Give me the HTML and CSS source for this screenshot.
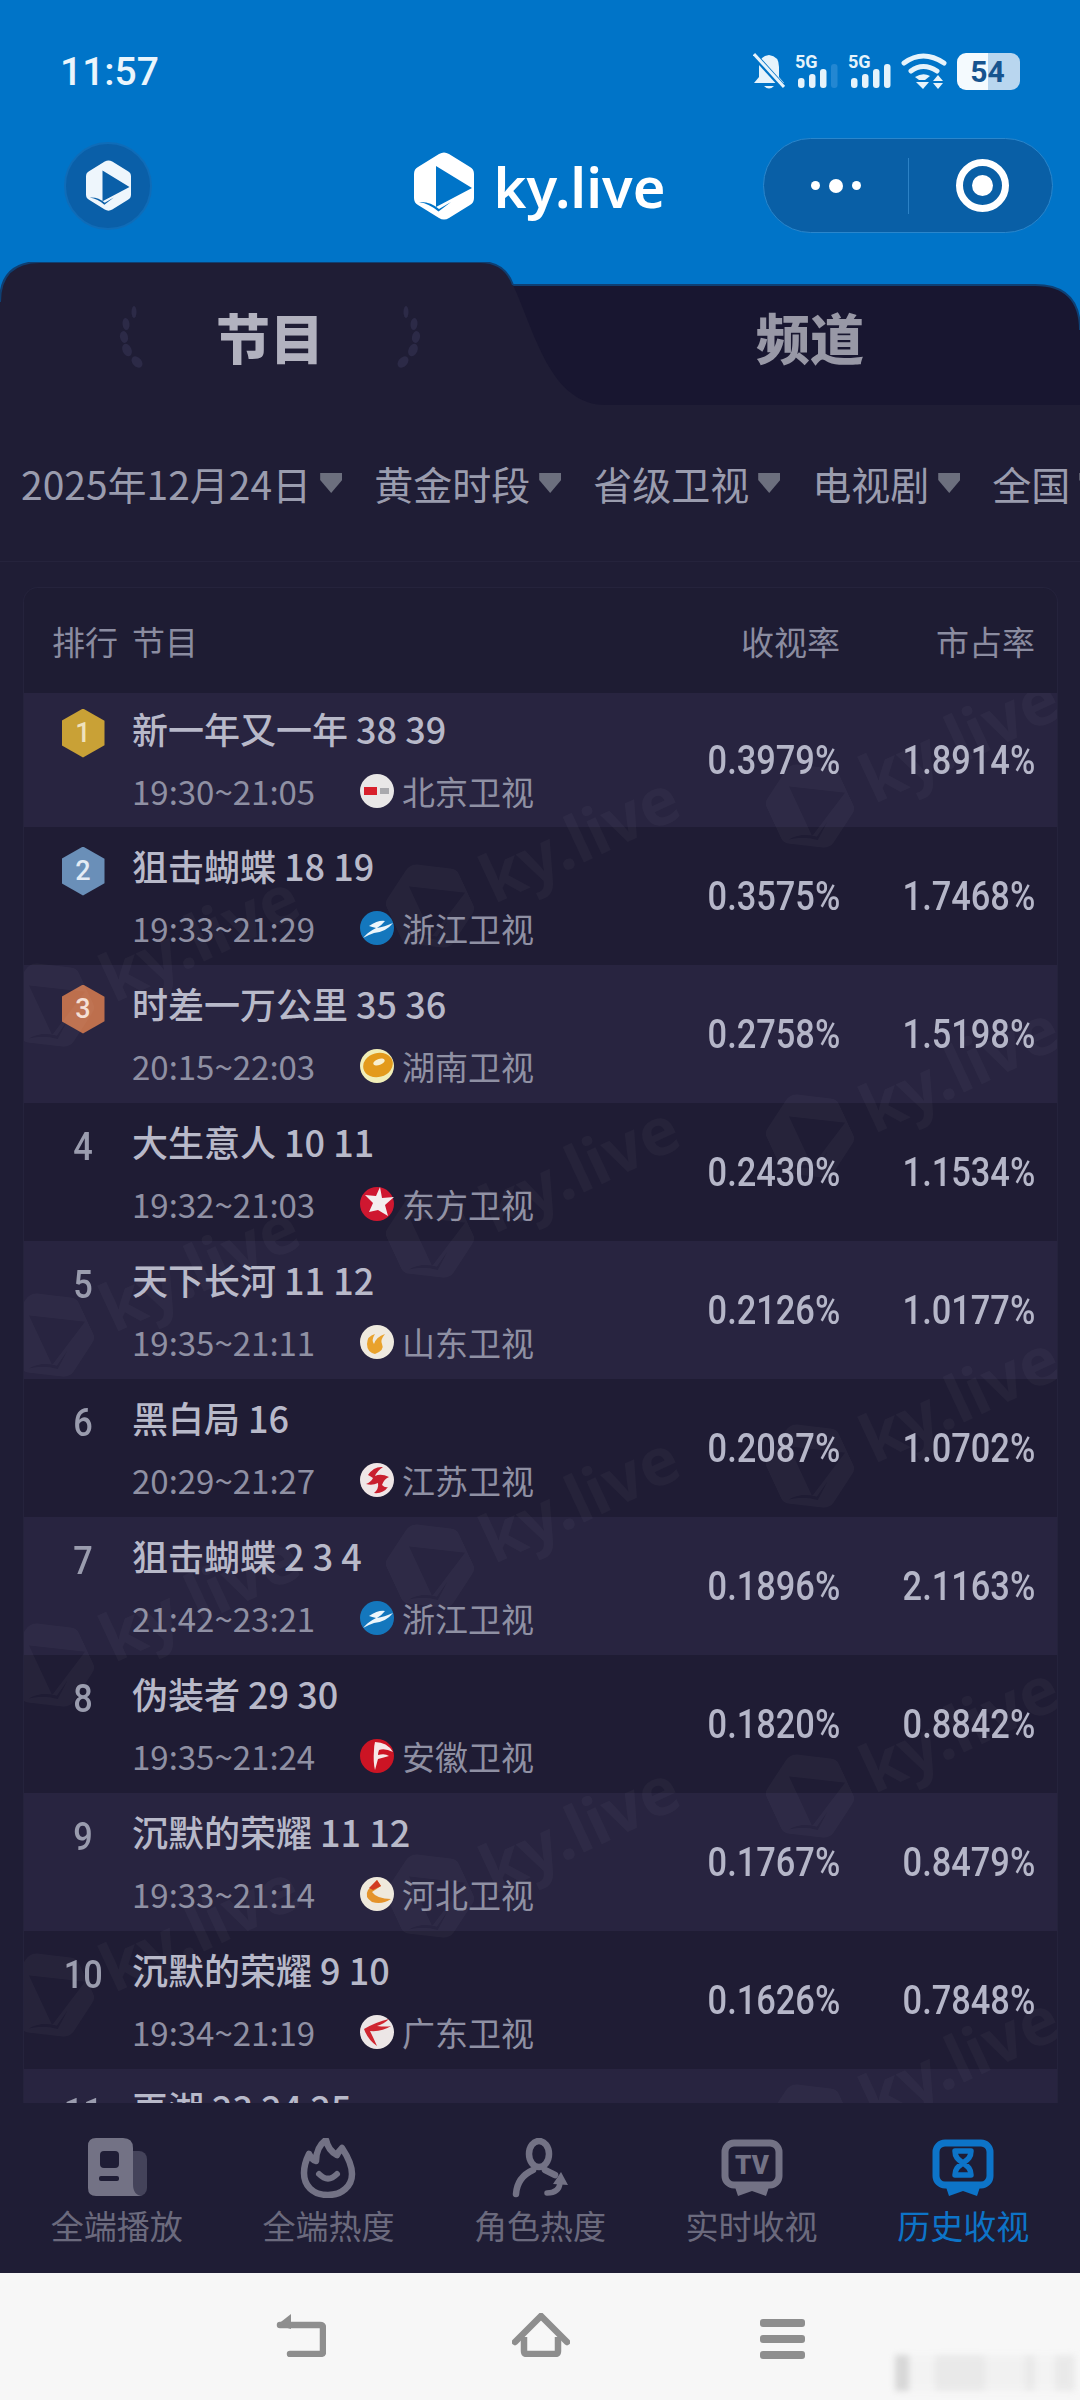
FILE: index.html
```html
<!DOCTYPE html>
<html lang="zh-CN">
<head>
  <meta charset="UTF-8" />
  <meta name="viewport" content="width=device-width, initial-scale=1.0"/>
  <title>ky.live 历史收视</title>
  <link rel="stylesheet" href="styles.css">
</head>
<body>

<!-- shared shapes -->
<svg class="defs" width="0" height="0">
  <symbol id="ky" viewBox="0 0 60 68">
    <path fill-rule="evenodd" d="M25 2Q30-1 35 2L56 15Q60 17 60 22V46Q60 51 56 53L35 66Q30 69 25 66L4 53Q0 51 0 46V22Q0 17 4 15ZM22 14V55L58 36ZM5 50Q16 49 25 57L37 50L24.500 59.500Q16 52 5 50Z"/>
  </symbol>
  <symbol id="ch-bj" viewBox="0 0 34 34">
    <circle cx="17" cy="17" r="17" fill="#e9e7e7"/>
    <rect x="4" y="13" width="13" height="8" fill="#d8202c"/>
    <rect x="20" y="14" width="9" height="6" fill="#a9a9ad"/>
  </symbol>
  <symbol id="ch-zj" viewBox="0 0 34 34">
    <circle cx="17" cy="17" r="17" fill="#1477bd"/>
    <path d="M9 15Q18 9 25 10Q21 15 17 17Q24 16 33 12Q26 21 14 22Q8 24 3 27Q8 21 16 17Q12 16 9 15Z" fill="#eef6fb"/>
  </symbol>
  <symbol id="ch-hn" viewBox="0 0 34 34">
    <circle cx="17" cy="17" r="17" fill="#f1eeb8"/>
    <ellipse cx="18" cy="16" rx="15" ry="12" fill="#e39a1c" transform="rotate(-15 18 16)"/>
    <ellipse cx="19" cy="13" rx="6" ry="3" fill="#f8efd0" transform="rotate(-20 19 13)"/>
  </symbol>
  <symbol id="ch-df" viewBox="0 0 34 34">
    <circle cx="17" cy="17" r="17" fill="#cf1730"/>
    <path d="M20 0L22 11L34 10L25 18L28 29L18 23L9 25L13 16L5 8L16 9Z" fill="#f3eeee"/>
  </symbol>
  <symbol id="ch-sd" viewBox="0 0 34 34">
    <circle cx="17" cy="17" r="17" fill="#efeadf"/>
    <path d="M7 19Q7 11 15 9Q11 15 14 19Q16 12 25 9Q20 15 22 19Q25 25 15 29Q7 27 7 19Z" fill="#e9a22c"/>
  </symbol>
  <symbol id="ch-js" viewBox="0 0 34 34">
    <circle cx="17" cy="17" r="17" fill="#efe6e6"/>
    <path d="M8 12Q14 3 23 4Q17 8 15 13Q21 10 29 14Q24 16 22 22Q25 25 28 24Q23 31 14 30Q19 26 18 20Q12 23 6 21Q11 19 13 15Q10 13 8 12Z" fill="#c91f2e"/>
  </symbol>
  <symbol id="ch-ah" viewBox="0 0 34 34">
    <circle cx="17" cy="17" r="17" fill="#cc1424"/>
    <path d="M15 3Q27 3 33 13Q25 9 19 11Q18 14 18 16Q25 14 29 17Q22 19 18 20L15 31Q13 23 14 11Q14 7 15 3Z" fill="#f6e7e7"/>
  </symbol>
  <symbol id="ch-hb" viewBox="0 0 34 34">
    <circle cx="17" cy="17" r="17" fill="#efe9dc"/>
    <path d="M17 3L21 9L12 15Q17 22 31 22Q22 28 12 25Q4 20 8 13Z" fill="#e4932a"/>
    <path d="M17 3L21 9L13 13L9 11Z" fill="#d23b22"/>
  </symbol>
  <symbol id="ch-gd" viewBox="0 0 34 34">
    <circle cx="17" cy="17" r="17" fill="#ece6e6"/>
    <path d="M4 14Q16 7 29 4Q24 9 17 11Q26 12 31 11Q22 17 10 16Q13 22 17 31Q8 25 4 14Z" fill="#cf2630"/>
  </symbol>
  <symbol id="tv-frame" viewBox="0 0 62 58">
    <rect x="4" y="4" width="54" height="42" rx="9" fill="none" stroke="currentColor" stroke-width="7"/>
    <path d="M14 48H48L45 57L31 52L17 57Z" fill="currentColor"/>
  </symbol>
  <symbol id="leaves" viewBox="0 0 30 62">
    <g fill="#2c2a47">
      <ellipse cx="16" cy="6" rx="2.500" ry="6"/>
      <ellipse cx="8" cy="18" rx="3.500" ry="6" transform="rotate(-6 8 18)"/>
      <ellipse cx="6" cy="31" rx="4" ry="6" transform="rotate(-12 6 31)"/>
      <ellipse cx="9" cy="44" rx="4.500" ry="6.500" transform="rotate(-24 9 44)"/>
      <ellipse cx="19" cy="56" rx="4.500" ry="6.500" transform="rotate(-42 19 56)"/>
    </g>
  </symbol>
</svg>

<header class="top">
  <div class="status">
    <span class="clock">11:57</span>
    <div class="status-icons">
      <svg width="32" height="37" viewBox="0 0 32 37"><path d="M16 2Q26 3 26 14V24L31 30H1L6 24V14Q6 3 16 2Z" fill="#e6f3fb"/><path d="M11 33H21Q16 38 11 33Z" fill="#e6f3fb"/><path d="M1 2L31 35" stroke="#0074c8" stroke-width="6"/><path d="M1 1L31 34" stroke="#e6f3fb" stroke-width="3"/></svg>
      <svg width="43" height="37" viewBox="0 0 43 37"><text x="0" y="15" class="net">5G</text><rect x="3" y="25" width="6.5" height="10" rx="3" fill="#e6f3fb"/><rect x="14" y="21" width="6.5" height="14" rx="3" fill="#e6f3fb"/><rect x="25" y="16" width="6.5" height="19" rx="3" fill="#e6f3fb"/><rect x="36" y="11" width="6.5" height="24" rx="3" fill="#2387d2"/></svg>
      <svg width="43" height="37" viewBox="0 0 43 37"><text x="0" y="15" class="net">5G</text><rect x="3" y="25" width="6.5" height="10" rx="3" fill="#e6f3fb"/><rect x="14" y="21" width="6.5" height="14" rx="3" fill="#e6f3fb"/><rect x="25" y="16" width="6.5" height="19" rx="3" fill="#e6f3fb"/><rect x="36" y="11" width="6.5" height="24" rx="3" fill="#e6f3fb"/></svg>
      <svg width="46" height="37" viewBox="0 0 46 37"><g fill="none" stroke="#e6f3fb" stroke-width="5" stroke-linecap="round"><path d="M3 10Q22-4 43 10"/><path d="M10 18Q22 9 36 18"/></g><path d="M14 24Q22 19 29 23L24 27H18Z" fill="#e6f3fb"/><path d="M15 29H28L22 36Z" fill="#e6f3fb"/><path d="M37 22L42 28H32ZM32 30H42L37 36Z" fill="#e6f3fb"/></svg>
      <div class="battery"><span class="battery-num">54</span></div>
    </div>
  </div>
  <div class="appbar">
    <div class="avatar"><svg width="45" height="51"><use href="#ky" fill="#eef6fc"/></svg></div>
    <div class="brand">
      <svg width="60" height="68"><use href="#ky" fill="#fff"/></svg>
      <span class="brand-name">ky.live</span>
    </div>
    <div class="capsule">
      <div class="capsule-dots"><i class="dot"></i><i class="dot dot-big"></i><i class="dot"></i></div>
      <div class="capsule-line"></div>
      <div class="capsule-target"><i class="target-core"></i></div>
    </div>
  </div>
</header>

<section class="tabs">
  <svg class="tabs-bg" width="1080" height="143" viewBox="0 0 1080 143">
    <path d="M480 23H1035Q1080 23 1080 68V143H0Z" fill="#181630"/>
    <path d="M480 23H1035Q1080 23 1080 68" fill="none" stroke="#0f3f72" stroke-width="2"/>
    <path d="M0 143V40Q0 0 40 0H480Q505 0 513 23C535 70 550 143 606 143Z" fill="#1f1d35"/>
    <path d="M0 40Q0 0 40 0H480Q505 0 513 23" fill="none" stroke="#0f3f72" stroke-width="2"/>
  </svg>
  <div class="tab tab-on">
    <svg class="laurel" width="30" height="62"><use href="#leaves"/></svg>
    <span>节目</span>
    <svg class="laurel laurel-r" width="30" height="62"><use href="#leaves"/></svg>
  </div>
  <div class="tab tab-off"><span>频道</span></div>
</section>

<main class="content">
  <div class="filters">
    <div class="filter">2025年12月24日<i class="caret"></i></div>
    <div class="filter">黄金时段<i class="caret"></i></div>
    <div class="filter">省级卫视<i class="caret"></i></div>
    <div class="filter">电视剧<i class="caret"></i></div>
    <div class="filter">全国<i class="caret"></i></div>
  </div>

  <div class="board">
    <div class="board-head">
      <span class="head-rank">排行</span>
      <span>节目</span>
      <span class="head-num">收视率</span>
      <span class="head-num">市占率</span>
    </div>
    <div class="board-body">
      <div class="rows">
        <div class="row">
          <div class="rank"><span class="medal medal-1">1</span></div>
          <div class="info">
            <div class="title">新一年又一年 38 39</div>
            <div class="sub"><span class="time">19:30~21:05</span><svg class="ch-logo"><use href="#ch-bj"/></svg>北京卫视</div>
          </div>
          <div class="num"><span>0.3979%</span></div>
          <div class="num"><span>1.8914%</span></div>
        </div>
        <div class="row">
          <div class="rank"><span class="medal medal-2">2</span></div>
          <div class="info">
            <div class="title">狙击蝴蝶 18 19</div>
            <div class="sub"><span class="time">19:33~21:29</span><svg class="ch-logo"><use href="#ch-zj"/></svg>浙江卫视</div>
          </div>
          <div class="num"><span>0.3575%</span></div>
          <div class="num"><span>1.7468%</span></div>
        </div>
        <div class="row">
          <div class="rank"><span class="medal medal-3">3</span></div>
          <div class="info">
            <div class="title">时差一万公里 35 36</div>
            <div class="sub"><span class="time">20:15~22:03</span><svg class="ch-logo"><use href="#ch-hn"/></svg>湖南卫视</div>
          </div>
          <div class="num"><span>0.2758%</span></div>
          <div class="num"><span>1.5198%</span></div>
        </div>
        <div class="row">
          <div class="rank"><span class="rank-num">4</span></div>
          <div class="info">
            <div class="title">大生意人 10 11</div>
            <div class="sub"><span class="time">19:32~21:03</span><svg class="ch-logo"><use href="#ch-df"/></svg>东方卫视</div>
          </div>
          <div class="num"><span>0.2430%</span></div>
          <div class="num"><span>1.1534%</span></div>
        </div>
        <div class="row">
          <div class="rank"><span class="rank-num">5</span></div>
          <div class="info">
            <div class="title">天下长河 11 12</div>
            <div class="sub"><span class="time">19:35~21:11</span><svg class="ch-logo"><use href="#ch-sd"/></svg>山东卫视</div>
          </div>
          <div class="num"><span>0.2126%</span></div>
          <div class="num"><span>1.0177%</span></div>
        </div>
        <div class="row">
          <div class="rank"><span class="rank-num">6</span></div>
          <div class="info">
            <div class="title">黑白局 16</div>
            <div class="sub"><span class="time">20:29~21:27</span><svg class="ch-logo"><use href="#ch-js"/></svg>江苏卫视</div>
          </div>
          <div class="num"><span>0.2087%</span></div>
          <div class="num"><span>1.0702%</span></div>
        </div>
        <div class="row">
          <div class="rank"><span class="rank-num">7</span></div>
          <div class="info">
            <div class="title">狙击蝴蝶 2 3 4</div>
            <div class="sub"><span class="time">21:42~23:21</span><svg class="ch-logo"><use href="#ch-zj"/></svg>浙江卫视</div>
          </div>
          <div class="num"><span>0.1896%</span></div>
          <div class="num"><span>2.1163%</span></div>
        </div>
        <div class="row">
          <div class="rank"><span class="rank-num">8</span></div>
          <div class="info">
            <div class="title">伪装者 29 30</div>
            <div class="sub"><span class="time">19:35~21:24</span><svg class="ch-logo"><use href="#ch-ah"/></svg>安徽卫视</div>
          </div>
          <div class="num"><span>0.1820%</span></div>
          <div class="num"><span>0.8842%</span></div>
        </div>
        <div class="row">
          <div class="rank"><span class="rank-num">9</span></div>
          <div class="info">
            <div class="title">沉默的荣耀 11 12</div>
            <div class="sub"><span class="time">19:33~21:14</span><svg class="ch-logo"><use href="#ch-hb"/></svg>河北卫视</div>
          </div>
          <div class="num"><span>0.1767%</span></div>
          <div class="num"><span>0.8479%</span></div>
        </div>
        <div class="row">
          <div class="rank"><span class="rank-num">10</span></div>
          <div class="info">
            <div class="title">沉默的荣耀 9 10</div>
            <div class="sub"><span class="time">19:34~21:19</span><svg class="ch-logo"><use href="#ch-gd"/></svg>广东卫视</div>
          </div>
          <div class="num"><span>0.1626%</span></div>
          <div class="num"><span>0.7848%</span></div>
        </div>
        <div class="row">
          <div class="rank"><span class="rank-num">11</span></div>
          <div class="info">
            <div class="title">再湖 23 24 25</div>
          </div>
        </div>
      </div>

      <!-- watermark sits over the rows -->
      <div class="marks">
        <div class="mark-col mark-col-c">
          <div class="mark"><svg width="80" height="91"><use href="#ky"/></svg><span>ky.live</span></div>
          <div class="mark"><svg width="80" height="91"><use href="#ky"/></svg><span>ky.live</span></div>
          <div class="mark"><svg width="80" height="91"><use href="#ky"/></svg><span>ky.live</span></div>
          <div class="mark"><svg width="80" height="91"><use href="#ky"/></svg><span>ky.live</span></div>
        </div>
        <div class="mark-col mark-col-b">
          <div class="mark"><svg width="80" height="91"><use href="#ky"/></svg><span>ky.live</span></div>
          <div class="mark"><svg width="80" height="91"><use href="#ky"/></svg><span>ky.live</span></div>
          <div class="mark"><svg width="80" height="91"><use href="#ky"/></svg><span>ky.live</span></div>
          <div class="mark"><svg width="80" height="91"><use href="#ky"/></svg><span>ky.live</span></div>
        </div>
        <div class="mark-col mark-col-a">
          <div class="mark"><svg width="80" height="91"><use href="#ky"/></svg><span>ky.live</span></div>
          <div class="mark"><svg width="80" height="91"><use href="#ky"/></svg><span>ky.live</span></div>
          <div class="mark"><svg width="80" height="91"><use href="#ky"/></svg><span>ky.live</span></div>
          <div class="mark"><svg width="80" height="91"><use href="#ky"/></svg><span>ky.live</span></div>
          <div class="mark"><svg width="80" height="91"><use href="#ky"/></svg><span>ky.live</span></div>
        </div>
      </div>
    </div>
  </div>
</main>

<nav class="tabbar">
  <div class="tabbar-item">
    <svg width="60" height="60" viewBox="0 0 60 60">
      <rect x="30" y="13" width="30" height="45" rx="8" fill="#44435a"/>
      <path d="M9 0H36Q46 0 46 10V46Q46 58 56 58H9Q1 58 1 50V8Q1 0 9 0Z" fill="#737285"/>
      <rect x="13" y="13" width="19" height="17" rx="4" fill="#1f1d35"/>
      <rect x="12" y="38" width="20" height="5" rx="2" fill="#1f1d35"/>
    </svg>
    <span>全端播放</span>
  </div>
  <div class="tabbar-item">
    <svg width="60" height="60" viewBox="0 0 60 60">
      <path d="M30 57C14 57 6 47 6 35C6 28 8 22 11 16C13 20 15 22 18 23C18 14 22 6 28 2C30 11 35 15 39 17C40 14 42 12 44 10C50 19 54 27 54 36C54 48 44 57 30 57Z" fill="none" stroke="#737285" stroke-width="6.500" stroke-linejoin="round"/>
      <path d="M21 36Q30 45 39 36" fill="none" stroke="#737285" stroke-width="6" stroke-linecap="round"/>
    </svg>
    <span>全端热度</span>
  </div>
  <div class="tabbar-item">
    <svg width="60" height="60" viewBox="0 0 60 60">
      <ellipse cx="29" cy="16" rx="10" ry="13" fill="none" stroke="#737285" stroke-width="6.500"/>
      <path d="M6 56C7 43 14 36 23 32M35 32L45 37" fill="none" stroke="#737285" stroke-width="6.500" stroke-linecap="round"/>
      <path d="M37 55Q49 55 50 45" fill="none" stroke="#737285" stroke-width="5.500" stroke-linecap="round"/>
      <path d="M43 46L51 34L58 47Z" fill="#737285"/>
    </svg>
    <span>角色热度</span>
  </div>
  <div class="tabbar-item tv-item">
    <svg width="62" height="60" viewBox="0 0 62 60">
      <use href="#tv-frame"/>
      <text x="31" y="36" text-anchor="middle" class="tv-text">TV</text>
    </svg>
    <span>实时收视</span>
  </div>
  <div class="tabbar-item tabbar-on">
    <svg width="62" height="60" viewBox="0 0 62 60">
      <use href="#tv-frame"/>
      <path d="M23 13H39C39 20 35 22 31 25C27 28 23 30 23 37H39C39 30 35 28 31 25C27 22 23 20 23 13Z" fill="none" stroke="currentColor" stroke-width="5.5" stroke-linejoin="round"/>
    </svg>
    <span>历史收视</span>
  </div>
</nav>

<footer class="sysbar">
  <svg width="50" height="44" viewBox="0 0 50 44"><path d="M4 12H44Q47 12 47 15V39Q47 41 44 41H14" fill="none" stroke="#8e8e8e" stroke-width="6.5" stroke-linecap="round"/><path d="M1 12L15 1V16Z" fill="#8e8e8e"/></svg>
  <svg width="58" height="44" viewBox="0 0 58 44"><path d="M3 29L29 3L55 29" fill="none" stroke="#8e8e8e" stroke-width="6.5" stroke-linecap="round" stroke-linejoin="round"/><path d="M12 24V38Q12 41 15 41H43Q46 41 46 38V24" fill="none" stroke="#8e8e8e" stroke-width="6.5"/></svg>
  <div class="menu-icon"><i></i><i></i><i></i></div>
  <div class="smudge"></div>
</footer>

</body>
</html>
```

FILE: styles.css
```css
* { box-sizing: border-box; margin: 0; padding: 0; }
body { width: 1080px; height: 2400px; overflow: hidden; display: flex; flex-direction: column; background-color: #1f1d35; color: #b8b9c9; font-family: "Noto Sans CJK SC", "Noto Sans", sans-serif; }
i { display: block; }
.defs { position: absolute; }

/* blue top */
.top { background-color: #0074c8; height: 262px; flex: none; }
.status { height: 138px; padding: 53px 60px 0 60px; display: flex; justify-content: space-between; align-items: flex-start; color: #eaf5fc; }
.clock { font-family: Roboto, sans-serif; font-size: 39px; line-height: 38px; font-weight: 500; }
.status-icons { display: flex; gap: 10px; align-items: flex-start; }
.net { font-family: Roboto, sans-serif; font-size: 18px; font-weight: 700; fill: #e6f3fb; }
.battery { width: 63px; height: 37px; border-radius: 9px; background: linear-gradient(90deg, #f4fafe 0 50%, #b9d6ef 50% 100%); display: flex; align-items: center; justify-content: center; padding-right: 2px; }
.battery-num { font-family: Roboto, sans-serif; font-size: 30px; font-weight: 700; color: #17548f; }

.appbar { height: 95px; padding: 0 27px 0 64px; display: flex; align-items: center; justify-content: space-between; }
.avatar { width: 88px; height: 88px; border-radius: 50%; background-color: #0a5fa8; border: 2px solid #0f6cb8; display: flex; align-items: center; justify-content: center; }
.brand { display: flex; align-items: center; gap: 20px; margin-left: 164px; }
.brand-name { font-family: "Noto Sans", sans-serif; font-size: 56px; font-weight: 600; color: #fff; line-height: 68px; }
.capsule { width: 290px; height: 95px; border-radius: 48px; background-color: #095fa6; border: 1.5px solid #2a86cc; display: flex; align-items: center; }
.capsule-dots { width: 144px; display: flex; justify-content: center; align-items: center; gap: 9px; }
.dot { width: 9px; height: 9px; border-radius: 50%; background-color: #fff; }
.dot-big { width: 14px; height: 14px; }
.capsule-line { width: 1px; height: 56px; background-color: #2c82c6; }
.capsule-target { width: 53px; height: 53px; margin-left: 47px; border-radius: 50%; border: 7px solid #fff; display: flex; align-items: center; justify-content: center; }
.target-core { width: 21px; height: 21px; border-radius: 50%; background-color: #fff; }

/* tabs */
.tabs { position: relative; height: 143px; flex: none; display: flex; background-color: #0074c8; }
.tabs-bg { position: absolute; left: 0; top: 0; }
.tab { position: relative; width: 540px; padding-top: 6px; display: flex; align-items: center; justify-content: center; gap: 68px; font-size: 54px; line-height: 60px; font-weight: 900; }
.tab-on { color: #b2b2bf; }
.tab-off { color: #9898a6; }
.laurel-r { transform: scaleX(-1); }

/* filter row */
.content { flex: 1; min-height: 0; overflow: hidden; background-color: #1f1d35; }
.filters { height: 157px; padding-left: 21px; display: flex; align-items: center; gap: 32px; white-space: nowrap; border-bottom: 1px solid #25233c; font-size: 39px; color: #9a9cae; }
.filter { display: flex; align-items: center; gap: 9px; flex: none; }
.caret { width: 22px; height: 20px; background-color: #6c6f7e; clip-path: polygon(0 0, 100% 0, 100% 35%, 50% 100%, 0 35%); }

/* ranking board */
.board { margin: 26px 23px 0 24px; border-radius: 14px 14px 0 0; background-color: #1e1c33; box-shadow: 0 0 0 1px #25233c; }
.board-head { height: 105px; padding-right: 22px; display: grid; grid-template-columns: 108px 1fr 140px 195px; align-items: center; font-size: 33px; color: #8b8ca0; }
.head-rank { padding-left: 28px; }
.head-num { text-align: right; }
.board-body { position: relative; overflow: hidden; }
.row { height: 138px; padding-right: 22px; display: grid; grid-template-columns: 108px 1fr 140px 195px; background-color: #1f1c34; }
.row:first-child { height: 134px; }
.row:first-child .rank { height: 80px; }
.row:first-child .title { padding-top: 12px; }
.row:nth-child(odd) { background-color: #282440; }

.rank { height: 88px; padding-left: 10px; display: flex; align-items: center; justify-content: center; }
.rank-num { font-family: Roboto, sans-serif; font-size: 39px; font-weight: 500; color: #9a9cae; display: inline-block; transform: scaleX(0.88); }
.medal { width: 43px; height: 49px; clip-path: polygon(50% 0, 100% 25%, 100% 75%, 50% 100%, 0 75%, 0 25%); display: flex; align-items: center; justify-content: center; font-family: Roboto, sans-serif; font-size: 27px; font-weight: 500; }
.medal-1 { background-color: #c9a136; color: #efe2bd; }
.medal-2 { background-color: #6a8fb8; color: #e4ecf5; }
.medal-3 { background-color: #bd6f4d; color: #f4dfd5; }

.title { padding-top: 15px; font-size: 36px; line-height: 46px; font-weight: 500; color: #b8b9c9; white-space: nowrap; }
.sub { margin-top: 20px; display: flex; align-items: center; font-size: 33px; line-height: 40px; color: #8f90a3; white-space: nowrap; }
.time { width: 228px; flex: none; }
.ch-logo { width: 34px; height: 34px; margin-right: 8px; flex: none; }
.num { display: flex; align-items: center; justify-content: flex-end; }
.num span { font-family: Roboto, sans-serif; font-size: 40px; font-weight: 500; color: #b5b6c8; display: inline-block; transform: scaleX(0.86); transform-origin: right center; }

/* watermark */
.marks { position: absolute; left: -60px; top: 0; display: flex; }
.mark-col { width: 380px; flex: none; }
.mark-col-c { margin-top: 98px; }
.mark-col-b { margin-top: -1px; }
.mark-col-a { margin-top: -101px; }
.mark { height: 330px; display: flex; align-items: center; justify-content: center; gap: 18px; transform: rotate(-25deg); fill: rgba(255, 255, 255, 0.03); color: rgba(255, 255, 255, 0.03); }
.mark span { font-family: "Noto Sans", sans-serif; font-size: 66px; font-weight: 700; }

/* bottom nav */
.tabbar { height: 170px; flex: none; padding: 35px 11px 0; display: grid; grid-template-columns: repeat(5, 1fr); background-color: #1f1d35; position: relative; color: #6b6a7d; }
.tabbar-item { display: flex; flex-direction: column; align-items: center; gap: 5px; font-size: 33px; line-height: 44px; }
.tv-item { color: #737285; }
.tv-item span { color: #6b6a7d; }
.tv-text { font-family: Roboto, sans-serif; font-size: 26px; font-weight: 900; fill: #737285; }
.tabbar-on { color: #0d74c8; }

/* phone buttons */
.sysbar { position: relative; height: 127px; flex: none; background-color: #f7f7f7; display: flex; align-items: flex-start; padding: 40px 0 0 276px; }
.sysbar svg:nth-child(2) { margin-left: 186px; }
.menu-icon { margin-left: 190px; padding-top: 6px; display: flex; flex-direction: column; gap: 8px; }
.menu-icon i { width: 45px; height: 8px; border-radius: 3px; background-color: #8e8e8e; }
.smudge { position: absolute; left: 895px; top: 82px; width: 180px; height: 36px; filter: blur(3px); opacity: 0.5; background: linear-gradient(90deg, #b8b8b8 0 14px, #f0f0f0 14px 40px, #dcdcdc 40px 90px, #ececec 90px 130px, #dddddd 130px 140px, #f0f0f0 140px 160px, #dddddd 160px 180px); }
```
